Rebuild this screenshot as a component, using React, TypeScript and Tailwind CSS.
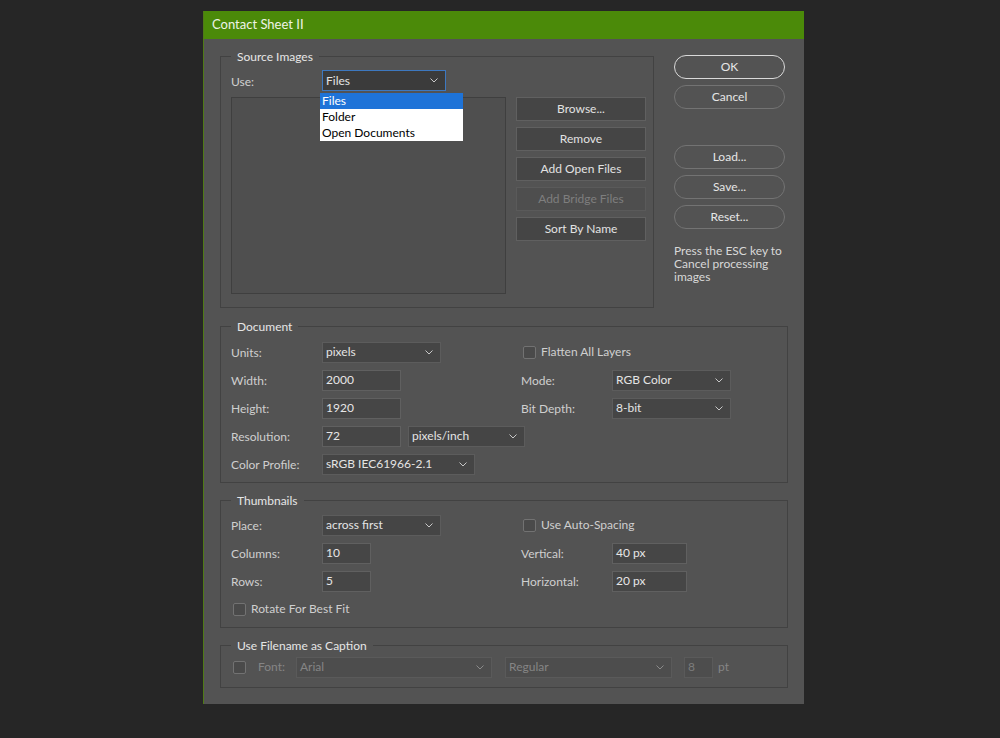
import React from "react";

const Chevron: React.FC<{ dim?: boolean }> = ({ dim }) => (
  <svg width="8" height="5" viewBox="0 0 8 5" className="shrink-0">
    <polyline
      points="0.5,0.5 4,4 7.5,0.5"
      fill="none"
      stroke={dim ? "#8a8a8a" : "#c8c8c8"}
      strokeWidth="1"
    />
  </svg>
);

const Select: React.FC<{
  value: string;
  w: string;
  dim?: boolean;
  focus?: boolean;
  children?: React.ReactNode;
}> = ({ value, w, dim, focus, children }) => (
  <div
    className={`relative shrink-0 h-[21px] ${w} flex items-center justify-between pl-[3px] pr-[7px] border ${
      focus
        ? "border-[#3d78c0] bg-[#3b3b3b]"
        : dim
        ? "border-[#5a5a5a] bg-[#4d4d4d]"
        : "border-[#5c5c5c] bg-[#454545]"
    } ${dim ? "text-[#858585]" : "text-[#e4e4e4]"}`}
  >
    <span>{value}</span>
    <Chevron dim={dim} />
    {children}
  </div>
);

const Input: React.FC<{ value: string; w: string; dim?: boolean }> = ({
  value,
  w,
  dim,
}) => (
  <div
    className={`shrink-0 h-[21px] ${w} flex items-center pl-[3px] border ${
      dim
        ? "border-[#5a5a5a] bg-[#4d4d4d] text-[#7c7c7c]"
        : "border-[#606060] bg-[#464646] text-[#e6e6e6]"
    }`}
  >
    {value}
  </div>
);

const Checkbox: React.FC<{ label?: string }> = ({ label }) => (
  <div className="flex items-center shrink-0">
    <div className="ml-[2px] w-[13px] h-[13px] rounded-[2px] border border-[#727272] bg-[#4a4a4a]" />
    {label && <span className="ml-[5px]">{label}</span>}
  </div>
);

const RectButton: React.FC<{ label: string; disabled?: boolean }> = ({
  label,
  disabled,
}) => (
  <div
    className={`h-[24px] w-[130px] flex items-center justify-center border ${
      disabled
        ? "bg-[#4e4e4e] border-[#5a5a5a] text-[#7e7e7e]"
        : "bg-[#454545] border-[#606060] text-[#e2e2e2]"
    }`}
  >
    {label}
  </div>
);

const PillButton: React.FC<{ label: string; primary?: boolean }> = ({
  label,
  primary,
}) => (
  <div
    className={`h-[24px] w-[111px] rounded-full flex items-center justify-center border text-[#e6e6e6] ${
      primary ? "border-[#d9d9d9]" : "border-[#737373]"
    }`}
  >
    {label}
  </div>
);

const Group: React.FC<{
  title: string;
  className?: string;
  children: React.ReactNode;
}> = ({ title, className = "", children }) => (
  <fieldset className={`min-w-0 border border-[#424242] pl-[10px] ${className}`}>
    <legend className="px-[6px] leading-[16px] text-[#e6e6e6] translate-y-[1px]">
      {title}
    </legend>
    {children}
  </fieldset>
);

const Row: React.FC<{ label?: string; children: React.ReactNode }> = ({
  label,
  children,
}) => (
  <div className="h-[28px] flex items-center">
    {label !== undefined && (
      <span className="w-[91px] shrink-0 pt-[2px]">{label}</span>
    )}
    {children}
  </div>
);

export default function App() {
  return (
    <div className="w-[1000px] h-[738px] bg-[#262626] pt-[11px] pl-[203px] font-['Lato','Noto_Sans',sans-serif] text-[12px] text-[#cfcfcf]">
      <div className="w-[601px] h-[693px] bg-[#535353] border-l border-[#4f7a16]">
        {/* Title bar */}
        <div className="h-[28px] bg-[#4b8a09] flex items-center pl-[8px] text-[13px] text-[#eef3e6]">
          Contact Sheet II
        </div>

        <div className="px-[16px] pt-[9px]">
          {/* Top: Source images + buttons */}
          <div className="flex">
            <Group title="Source Images" className="w-[434px] shrink-0 pr-[7px] pb-[13px]">
              <div className="mt-[6px] h-[21px] flex items-center">
                <span className="w-[91px] pt-[3px]">Use:</span>
                <Select value="Files" w="w-[124px]" focus>
                  <div className="absolute left-[-3px] top-[22px] w-[143px] bg-white text-black z-10">
                    <div className="h-[16px] leading-[16px] pl-[2px] bg-[#1e73d8] text-white">
                      Files
                    </div>
                    <div className="h-[16px] leading-[16px] pl-[2px]">Folder</div>
                    <div className="h-[16px] leading-[16px] pl-[2px]">
                      Open Documents
                    </div>
                  </div>
                </Select>
              </div>
              <div className="mt-[6px] flex">
                <div className="w-[275px] h-[197px] shrink-0 bg-[#4f4f4f] border border-[#3f3f3f]" />
                <div className="ml-[10px] flex flex-col gap-[6px]">
                  <RectButton label="Browse..." />
                  <RectButton label="Remove" />
                  <RectButton label="Add Open Files" />
                  <RectButton label="Add Bridge Files" disabled />
                  <RectButton label="Sort By Name" />
                </div>
              </div>
            </Group>

            <div className="ml-[20px] mt-[7px] flex flex-col">
              <PillButton label="OK" primary />
              <div className="mt-[6px]">
                <PillButton label="Cancel" />
              </div>
              <div className="mt-[36px] flex flex-col gap-[6px]">
                <PillButton label="Load..." />
                <PillButton label="Save..." />
                <PillButton label="Reset..." />
              </div>
              <p className="mt-[15px] leading-[13px] text-[#d8d8d8]">
                Press the ESC key to
                <br />
                Cancel processing
                <br />
                images
              </p>
            </div>
          </div>

          {/* Document */}
          <Group title="Document" className="mt-[10px] pt-[4px] pb-[4px]">
            <div className="flex">
              <div className="w-[290px] shrink-0 flex flex-col">
                <Row label="Units:">
                  <Select value="pixels" w="w-[119px]" />
                </Row>
                <Row label="Width:">
                  <Input value="2000" w="w-[79px]" />
                </Row>
                <Row label="Height:">
                  <Input value="1920" w="w-[79px]" />
                </Row>
                <Row label="Resolution:">
                  <Input value="72" w="w-[79px]" />
                  <div className="ml-[7px] shrink-0">
                    <Select value="pixels/inch" w="w-[117px]" />
                  </div>
                </Row>
                <Row label="Color Profile:">
                  <Select value="sRGB IEC61966-2.1" w="w-[153px]" />
                </Row>
              </div>
              <div className="flex flex-col">
                <Row>
                  <Checkbox label="Flatten All Layers" />
                </Row>
                <Row label="Mode:">
                  <Select value="RGB Color" w="w-[119px]" />
                </Row>
                <Row label="Bit Depth:">
                  <Select value="8-bit" w="w-[119px]" />
                </Row>
              </div>
            </div>
          </Group>

          {/* Thumbnails */}
          <Group title="Thumbnails" className="mt-[9px] pt-[3px] pb-[4px]">
            <div className="flex">
              <div className="w-[290px] shrink-0 flex flex-col">
                <Row label="Place:">
                  <Select value="across first" w="w-[119px]" />
                </Row>
                <Row label="Columns:">
                  <Input value="10" w="w-[49px]" />
                </Row>
                <Row label="Rows:">
                  <Input value="5" w="w-[49px]" />
                </Row>
                <Row>
                  <Checkbox label="Rotate For Best Fit" />
                </Row>
              </div>
              <div className="flex flex-col">
                <Row>
                  <Checkbox label="Use Auto-Spacing" />
                </Row>
                <Row label="Vertical:">
                  <Input value="40 px" w="w-[75px]" />
                </Row>
                <Row label="Horizontal:">
                  <Input value="20 px" w="w-[75px]" />
                </Row>
              </div>
            </div>
          </Group>

          {/* Caption */}
          <Group title="Use Filename as Caption" className="mt-[9px] pb-[6px]">
            <div className="h-[28px] flex items-center">
              <Checkbox />
              <span className="ml-[12px] w-[38px] shrink-0 text-[#858585]">Font:</span>
              <Select value="Arial" w="w-[196px]" dim />
              <div className="ml-[13px]">
                <Select value="Regular" w="w-[167px]" dim />
              </div>
              <div className="ml-[12px]">
                <Input value="8" w="w-[29px]" dim />
              </div>
              <span className="ml-[5px] text-[#858585]">pt</span>
            </div>
          </Group>
        </div>
      </div>
    </div>
  );
}
